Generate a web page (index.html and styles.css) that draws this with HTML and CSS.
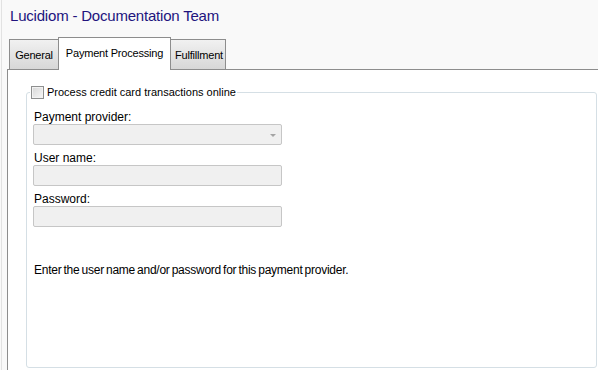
FILE: index.html
```html
<!DOCTYPE html>
<html lang="en">

<head>
    <meta charset="utf-8">
    <title>Lucidiom - Documentation Team</title>
    <link rel="stylesheet" href="styles.css">
</head>

<body>
    <div class="window">
        <div class="header">
            <h1 class="title">Lucidiom - Documentation Team</h1>
        </div>

        <!-- Tab strip: the bottom line is drawn by the spacer, the inactive tabs and the filler -->
        <div class="tabstrip">
            <div class="tab-spacer"></div>
            <div class="tab tab-general">General</div>
            <div class="tab tab-active">Payment Processing</div>
            <div class="tab tab-fulfillment">Fulfillment</div>
            <div class="tab-filler"></div>
        </div>

        <div class="pane">
            <fieldset class="group">
                <legend class="group-legend">
                    <input type="checkbox" class="check" id="online">
                    <label for="online">Process credit card transactions online</label>
                </legend>

                <label class="field-label" for="provider">Payment provider:</label>
                <div class="select" id="provider"><span class="select-arrow"></span></div>

                <label class="field-label" for="username">User name:</label>
                <input type="text" class="field" id="username" disabled>

                <label class="field-label" for="password">Password:</label>
                <input type="password" class="field" id="password" disabled>

                <p class="hint">Enter the user name and/or password for this payment provider.</p>
            </fieldset>
        </div>
    </div>
</body>

</html>
```

FILE: styles.css
```css
html,
body {
    margin: 0;
    padding: 0;
}

body {
    font-family: "Liberation Sans", Arial, sans-serif;
    color: #000;
    background-color: #f9f9f9;
}

.window {
    display: flex;
    flex-direction: column;
    height: 370px;
    margin-left: 1px;
    border-left: 1px solid #e2e2e2;
    overflow: hidden;
}

.header {
    padding-left: 8px;
}

.title {
    margin: 0;
    padding-top: 7px;
    font-size: 15px;
    line-height: 18px;
    font-weight: normal;
    letter-spacing: -0.2px;
    color: #22147e;
}

/* Tabs */
.tabstrip {
    display: flex;
    align-items: flex-end;
    margin-top: 12px;
    margin-left: 5px;
}

.tab-spacer {
    width: 2px;
    border-bottom: 1px solid #8d8d8d;
}

.tab-filler {
    flex: 1;
    border-bottom: 1px solid #8d8d8d;
}

.tab {
    box-sizing: border-box;
    font-size: 11px;
    line-height: 13px;
    letter-spacing: -0.2px;
    text-align: center;
    white-space: nowrap;
    padding: 9px 0 7px;
    height: 31px;
    border-top: 1px solid #8d8d8d;
    border-bottom: 1px solid #8d8d8d;
    background: linear-gradient(#f1f1f1, #d7d7d7);
}

.tab-general {
    width: 49px;
    border-left: 1px solid #8d8d8d;
}

.tab-fulfillment {
    width: 55px;
    padding-left: 2px;
    border-right: 1px solid #8d8d8d;
}

.tab-active {
    width: 113px;
    height: 33px;
    padding: 9px 0 10px;
    border-left: 1px solid #8d8d8d;
    border-right: 1px solid #8d8d8d;
    border-bottom: none;
    background: #fff;
}

/* Page body */
.pane {
    flex: 1;
    margin-left: 5px;
    padding: 16px 1px 0 18px;
    border-left: 1px solid #8d8d8d;
    background-color: #fff;
}

.group {
    box-sizing: border-box;
    height: 282px;
    margin: 0;
    padding: 11px 6px 0;
    border: 1px solid #d5dfe5;
    border-radius: 3px;
}

.group-legend {
    display: flex;
    align-items: center;
    margin-left: -3px;
    padding: 0 1px;
    font-size: 11px;
    line-height: 13px;
}

.check {
    appearance: none;
    -webkit-appearance: none;
    box-sizing: border-box;
    width: 13px;
    height: 13px;
    margin: 0 3px 0 0;
    border: 1px solid #8e8f8f;
    background: linear-gradient(135deg, #d6d6d6, #f7f7f7);
    box-shadow: inset 0 0 0 1px #f2f2f2;
}

.field-label {
    display: block;
    font-size: 12px;
    line-height: 14px;
    padding-left: 1px;
}

.select,
.field {
    box-sizing: border-box;
    display: block;
    width: 249px;
    height: 21px;
    margin: 0 0 6px;
    border: 1px solid #c6c6c6;
    border-radius: 2px;
    background-color: #f0f0f0;
}

.select {
    display: flex;
    align-items: center;
    justify-content: flex-end;
    padding-right: 5px;
}

.select-arrow {
    width: 0;
    height: 0;
    margin-top: 1px;
    border-left: 3px solid transparent;
    border-right: 3px solid transparent;
    border-top: 3px solid #a4a4a4;
}

.field {
    appearance: none;
    -webkit-appearance: none;
    padding: 0;
}

.hint {
    margin: 36px 0 0;
    padding-left: 1px;
    font-size: 12px;
    line-height: 14px;
    letter-spacing: -0.25px;
    word-spacing: -1px;
}
```
